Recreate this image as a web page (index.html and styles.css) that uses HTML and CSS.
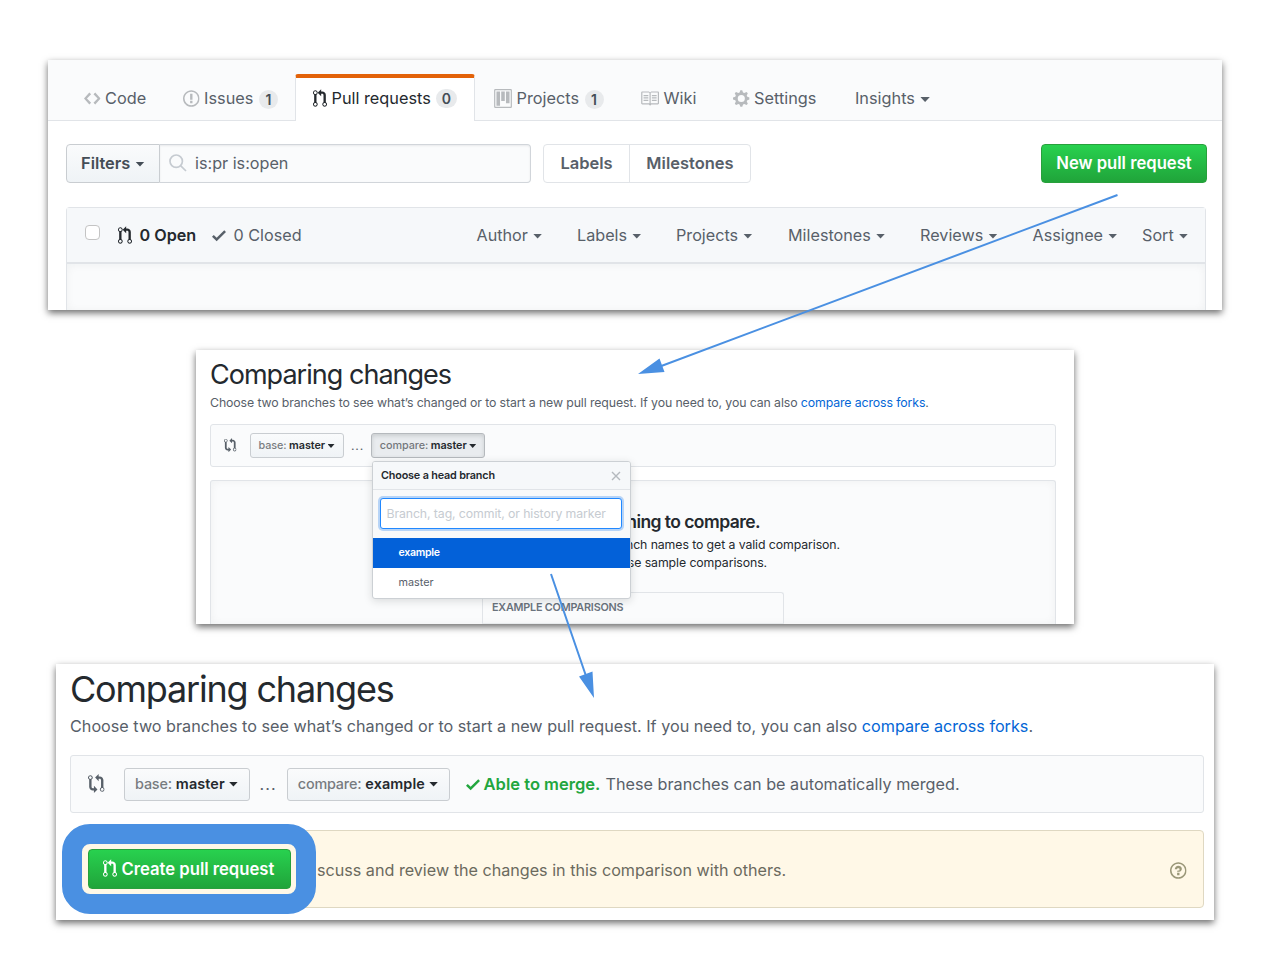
FILE: index.html
```html
<!DOCTYPE html>
<html lang="en">
<head>
<meta charset="utf-8">
<title>Creating a pull request</title>
<link rel="stylesheet" href="styles.css">
</head>
<body>
<svg class="defs" aria-hidden="true">
  <symbol id="code" viewBox="0 0 14 16"><path d="M9.5 3L8 4.5 11.5 8 8 11.5 9.5 13 14 8 9.5 3zm-5 0L0 8l4.5 5L6 11.5 2.5 8 6 4.5 4.5 3z"/></symbol>
  <symbol id="issue" viewBox="0 0 14 16"><path d="M7 2.3c3.14 0 5.7 2.56 5.7 5.7s-2.56 5.7-5.7 5.7A5.71 5.71 0 0 1 1.3 8c0-3.14 2.56-5.7 5.7-5.7zM7 1C3.14 1 0 4.14 0 8s3.14 7 7 7 7-3.14 7-7-3.14-7-7-7zm1 3H6v5h2V4zm0 6H6v2h2v-2z"/></symbol>
  <symbol id="pr" viewBox="0 0 12 16"><path d="M11 11.28V5c-.03-.78-.34-1.47-.94-2.06C9.46 2.35 8.78 2.03 8 2H7V0L4 3l3 3V4h1c.27.02.48.11.69.31.21.2.3.42.31.69v6.28A1.993 1.993 0 0 0 10 15a1.993 1.993 0 0 0 1-3.72zm-1 2.92c-.66 0-1.2-.55-1.2-1.2 0-.65.55-1.2 1.2-1.2.65 0 1.2.55 1.2 1.2 0 .65-.55 1.2-1.2 1.2zM4 3c0-1.11-.89-2-2-2a1.993 1.993 0 0 0-1 3.72v6.56A1.993 1.993 0 0 0 2 15a1.993 1.993 0 0 0 1-3.72V4.72c.59-.34 1-.98 1-1.72zm-.8 10c0 .66-.55 1.2-1.2 1.2-.65 0-1.2-.55-1.2-1.2 0-.65.55-1.2 1.2-1.2.65 0 1.2.55 1.2 1.2zM2 4.2C1.34 4.2.8 3.65.8 3c0-.65.55-1.2 1.2-1.2.65 0 1.2.55 1.2 1.2 0 .65-.55 1.2-1.2 1.2z"/></symbol>
  <symbol id="compare" viewBox="0 0 14 16"><path d="M5 12H4c-.27-.02-.48-.11-.69-.31-.21-.2-.3-.42-.31-.69V4.72A1.993 1.993 0 0 0 2 1a1.993 1.993 0 0 0-1 3.72V11c.03.78.34 1.47.94 2.06.6.59 1.28.91 2.06.94h1v2l3-3-3-3v2zM2 1.8c.66 0 1.2.55 1.2 1.2 0 .65-.55 1.2-1.2 1.2C1.35 4.2.8 3.65.8 3c0-.65.55-1.2 1.2-1.2zm11 9.48V5c-.03-.78-.34-1.47-.94-2.06-.6-.59-1.28-.91-2.06-.94H9V0L6 3l3 3V4h1c.27.02.48.11.69.31.21.2.3.42.31.69v6.28A1.993 1.993 0 0 0 12 15a1.993 1.993 0 0 0 1-3.72zm-1 2.92c-.66 0-1.2-.55-1.2-1.2 0-.65.55-1.2 1.2-1.2.65 0 1.2.55 1.2 1.2 0 .65-.55 1.2-1.2 1.2z"/></symbol>
  <symbol id="project" viewBox="0 0 15 16"><path fill-rule="evenodd" d="M10 12h3V2h-3v10zm-4-2h3V2H6v8zm-4 4h3V2H2v12zm-1 1h13V1H1v14zM14 0H1a1 1 0 0 0-1 1v14a1 1 0 0 0 1 1h13a1 1 0 0 0 1-1V1a1 1 0 0 0-1-1z"/></symbol>
  <symbol id="book" viewBox="0 0 16 16"><path d="M3 5h4v1H3V5zm0 3h4V7H3v1zm0 2h4V9H3v1zm11-5h-4v1h4V5zm0 2h-4v1h4V7zm0 2h-4v1h4V9zm2-6v9c0 .55-.45 1-1 1H9.5l-1 1-1-1H2c-.55 0-1-.45-1-1V3c0-.55.45-1 1-1h5.5l1 1 1-1H15c.55 0 1 .45 1 1zm-8 .5L7.500 3H2v9h6V3.500zm7-.5H9.500l-.5.5V12h6V3z"/></symbol>
  <symbol id="gear" viewBox="0 0 14 16"><path fill-rule="evenodd" d="M14 8.77v-1.6l-1.94-.64-.45-1.09.88-1.84-1.13-1.13-1.81.91-1.09-.45-.69-1.92h-1.6l-.63 1.94-1.11.45-1.84-.88-1.13 1.13.91 1.81-.45 1.09L0 7.23v1.59l1.94.64.45 1.09-.88 1.84 1.13 1.13 1.81-.91 1.09.45.69 1.92h1.59l.63-1.94 1.11-.45 1.84.88 1.13-1.13-.92-1.81.47-1.09L14 8.75v.02zM7 11a3 3 0 1 1 0-6 3 3 0 0 1 0 6z"/></symbol>
  <symbol id="check" viewBox="0 0 12 16"><path d="M12 5l-8 8-4-4 1.5-1.5L4 10l6.5-6.5L12 5z"/></symbol>
  <symbol id="help" viewBox="0 0 14 16"><path d="M6 10h2v2H6v-2zm4-3.5C10 8.64 8 9 8 9H6c0-.55.45-1 1-1h.5c.28 0 .5-.22.5-.5v-1c0-.28-.22-.5-.5-.5h-1c-.28 0-.5.22-.5.5V7H4c0-1.5 1.5-3 3-3s3 1 3 2.5zM7 2.3c3.14 0 5.7 2.56 5.7 5.7s-2.56 5.7-5.7 5.7A5.71 5.71 0 0 1 1.3 8c0-3.14 2.56-5.7 5.7-5.7zM7 1C3.14 1 0 4.14 0 8s3.14 7 7 7 7-3.14 7-7-3.14-7-7-7z"/></symbol>
</svg>

<section class="panel panel-list">
  <nav class="tabs">
    <a class="tab"><svg class="icon i14"><use href="#code"/></svg><span>Code</span></a>
    <a class="tab"><svg class="icon i14"><use href="#issue"/></svg><span>Issues</span><b class="count">1</b></a>
    <a class="tab tab-active"><svg class="icon i12"><use href="#pr"/></svg><span>Pull requests</span><b class="count">0</b></a>
    <a class="tab"><svg class="icon i15"><use href="#project"/></svg><span>Projects</span><b class="count">1</b></a>
    <a class="tab"><svg class="icon i16"><use href="#book"/></svg><span>Wiki</span></a>
    <a class="tab"><svg class="icon i14"><use href="#gear"/></svg><span>Settings</span></a>
    <a class="tab"><span>Insights</span><i class="caret"></i></a>
  </nav>
  <div class="toolbar">
    <div class="filters">Filters<i class="caret"></i></div>
    <div class="search"><svg class="lens" viewBox="0 0 18 18"><circle cx="7.2" cy="7.2" r="6.2"/><path d="M11.8 11.8l5.2 5.2"/></svg><span>is:pr is:open</span></div>
    <div class="pair"><span>Labels</span><span>Milestones</span></div>
    <div class="green new-pr">New pull request</div>
  </div>
  <div class="list">
    <div class="list-head">
      <span class="box"></span>
      <span class="state open"><svg class="icon i12"><use href="#pr"/></svg>0 Open</span>
      <span class="state closed"><svg class="icon i12"><use href="#check"/></svg>0 Closed</span>
      <div class="sorts">
        <span>Author<i class="caret"></i></span><span>Labels<i class="caret"></i></span><span>Projects<i class="caret"></i></span><span>Milestones<i class="caret"></i></span><span>Reviews<i class="caret"></i></span><span>Assignee<i class="caret"></i></span><span>Sort<i class="caret"></i></span>
      </div>
    </div>
    <div class="list-body"></div>
  </div>
</section>

<section class="panel panel-small">
  <h1 class="title">Comparing changes</h1>
  <p class="lead">Choose two branches to see what’s changed or to start a new pull request. If you need to, you can also <a>compare across forks</a>.</p>
  <div class="range">
    <svg class="icon i14"><use href="#compare"/></svg>
    <span class="branch base"><em>base:</em><b>master</b><i class="caret"></i></span>
    <span class="dots">...</span>
    <span class="branch compare pressed"><em>compare:</em><b>master</b><i class="caret"></i></span>
  </div>
  <div class="blank">
    <h2>hing to compare.</h2>
    <p class="blank-one">nch names to get a valid comparison.</p>
    <p class="blank-two">se sample comparisons.</p>
    <div class="examples">EXAMPLE COMPARISONS</div>
  </div>
  <div class="menu">
    <div class="menu-head"><b>Choose a head branch</b><svg class="close" viewBox="0 0 10 10"><path d="M1 1l8 8M9 1L1 9"/></svg></div>
    <div class="menu-filter"><div class="field">Branch, tag, commit, or history marker</div></div>
    <div class="item selected">example</div>
    <div class="item">master</div>
  </div>
</section>

<section class="panel panel-large">
  <h1 class="title">Comparing changes</h1>
  <p class="lead">Choose two branches to see what’s changed or to start a new pull request. If you need to, you can also <a>compare across forks</a>.</p>
  <div class="range">
    <svg class="icon i14"><use href="#compare"/></svg>
    <span class="branch base"><em>base:</em><b>master</b><i class="caret"></i></span>
    <span class="dots">...</span>
    <span class="branch compare"><em>compare:</em><b>example</b><i class="caret"></i></span>
    <span class="able"><svg class="icon i12"><use href="#check"/></svg><b>Able to merge.</b></span>
    <span class="able-text">These branches can be automatically merged.</span>
  </div>
  <div class="notice">
    <div class="green create"><svg class="icon i12"><use href="#pr"/></svg><span>Create pull request</span></div>
    <span class="notice-text">scuss and review the changes in this comparison with others.</span>
    <svg class="icon i14 help"><use href="#help"/></svg>
  </div>
  <div class="ring"></div>
</section>

<svg class="arrows" viewBox="0 0 1262 970">
  <path class="line" d="M1117.500 195L660 366.500M551 574L586 676"/>
  <path class="head" d="M638 374L659.500 358.500L664.500 372ZM594 698L579 676.500L592.500 671.500Z"/>
</svg>
</body>
</html>
```
FILE: styles.css
```css
* { box-sizing: border-box; }
body { position: relative; margin: 0; width: 1262px; height: 970px; overflow: hidden; background: #fff; font-family: Inter, "Liberation Sans", sans-serif; font-size: 16.200px; color: #586069; padding-top: 60px; }
h1, h2, p { margin: 0; font-weight: 400; }
i, em { font-style: normal; }
a { color: #0366d6; }
span, b { white-space: nowrap; }
.defs { position: absolute; width: 0; height: 0; }
.icon { height: 19px; fill: currentColor; flex: none; }
.i12 { width: 14px; }
.i14 { width: 16.6px; }
.i15 { width: 18px; }
.i16 { width: 19px; }
.caret { flex: none; width: 9.400px; height: 5px; margin: 2px 0 0 5px; background: currentColor; clip-path: polygon(0 0, 100% 0, 50% 100%); }
.panel { position: relative; background: #fff; box-shadow: 0 3px 7px rgba(0,0,0,.58); }

/* Pull request list */
.panel-list { width: 1174px; height: 250px; margin-left: 48px; }
.tabs { display: grid; grid-template-columns: 99px 112px 180px 147px 92px 122px 100px; height: 61px; padding: 14px 0 0 36px; background: #fafbfc; border-bottom: 1.500px solid #e1e4e8; }
.tab { display: flex; align-items: center; gap: 4.500px; height: 47px; padding-top: 1px; font-size: 16.300px; color: #586069; }
.tab .icon { margin-top: 1px; color: #b7babd; }
.tab .caret { margin: 3px 0 0 1px; }
.tab-active { background: #fff; border: 1px solid #e1e4e8; border-top: 4px solid #e36209; border-bottom: 0; border-radius: 3px 3px 0 0; padding: 0 0 4px 17px; color: #24292e; }
.tab-active .icon { color: #24292e; }
.tab:nth-child(4), .tab:nth-child(6), .tab:nth-child(7) { padding-left: 19px; }
.tab:nth-child(5) { padding-left: 18px; }
.count { min-width: 19px; height: 19px; margin: 2px 0 0 1px; padding: 0 5.500px; border-radius: 10px; background: #e8eaec; font-size: 14px; font-weight: 600; line-height: 19px; text-align: center; color: #444d56; }
.toolbar { display: flex; margin: 23px 15px 0 18px; height: 39px; }
.filters { display: flex; align-items: center; width: 94px; padding: 0 0 1px 14px; border: 1px solid #c9cdd1; border-radius: 4px 0 0 4px; background: linear-gradient(#fafbfc, #eff3f6); font-size: 16.400px; font-weight: 600; color: #444d56; }
.search { display: flex; align-items: center; width: 371px; padding: 0 0 1px 9px; gap: 8px; border: 1px solid #d1d5da; border-left: 0; border-radius: 0 4px 4px 0; background: #fafbfc; box-shadow: inset 0 1px 2px rgba(27,31,35,.075); }
.lens { width: 18px; height: 18px; fill: none; stroke: #c6cbd1; stroke-width: 1.700; }
.pair { display: flex; margin-left: 12px; border: 1px solid #e1e4e8; border-radius: 4px; font-size: 16.500px; font-weight: 600; line-height: 37px; }
.pair span { width: 85px; text-align: center; }
.pair span + span { width: 121px; border-left: 1px solid #e1e4e8; }
.green { border: 1px solid #28a03c; border-radius: 4px; background: linear-gradient(#28d14f, #20a43a); color: #fff; font-size: 16.650px; font-weight: 600; }
.new-pr { width: 166px; margin-left: auto; line-height: 37px; text-align: center; }
.list { margin: 24px 16px 0 18px; height: 103px; border: 1.500px solid #e1e4e8; border-bottom: 0; border-radius: 4px 4px 0 0; }
.list-head { display: flex; align-items: center; height: 56px; background: #f6f8fa; border-bottom: 2px solid #e1e4e8; }
.list-body { height: 46px; background: #fafbfc; box-shadow: inset 0 1px 8px rgba(27,31,35,.05); }
.box { width: 15px; height: 15px; margin: -6px 0 0 18px; border: 1px solid #c4c4c4; border-radius: 4px; background: #fff; }
.state { display: flex; align-items: center; gap: 7.500px; }
.open { width: 94px; margin-left: 18px; color: #24292e; font-weight: 600; }
.sorts { display: grid; grid-template-columns: 100.500px 99px 112px 132px 112.500px 109.500px 60px; margin: 0 -1.500px 0 auto; width: 730px; }
.sorts span { display: flex; align-items: center; }

/* Comparison, branch menu open */
.panel-small { width: 878px; height: 274px; margin: 40px 0 0 196px; padding: 7px 18px 0 14px; font-size: 12.300px; }
.panel-small .title { font-size: 27px; line-height: 35px; letter-spacing: -.980px; color: #24292e; }
.title { white-space: nowrap; }
.lead { white-space: nowrap; }
.panel-small .lead { margin-top: 1px; line-height: 20px; letter-spacing: -.104px; }
.range { display: flex; align-items: center; border: 1px solid #e1e4e8; border-radius: 3px; background: #fafbfc; }
.panel-small .range { height: 43px; margin-top: 11px; padding-left: 13px; }
.panel-small .range .icon { width: 12.500px; height: 14.300px; }
.branch { display: flex; align-items: center; justify-content: center; border: 1px solid #c9cdd1; border-radius: 3px; background: linear-gradient(#fafbfc, #eff3f6); color: #24292e; }
.branch em { opacity: .6; font-weight: 500; }
.branch b { font-weight: 600; }
.panel-small .branch { height: 25px; gap: 2.500px; font-size: 10.800px; letter-spacing: -.05px; }
.panel-small .branch .caret { width: 7px; height: 4px; margin: 1px 0 0; }
.panel-small .base { width: 94px; margin-left: 13px; }
.panel-small .dots { width: 28px; text-align: center; letter-spacing: .8px; }
.panel-small .compare { width: 114px; margin-left: -.5px; }
.branch.pressed { background: #e9ecef; border-color: #b5b9bd; box-shadow: inset 0 2px 4px rgba(27,31,35,.15); }
.blank { height: 144px; margin-top: 13px; padding-top: 30px; border: 1px solid #e1e4e8; border-bottom: 0; border-radius: 3px 3px 0 0; background: #fafbfc; box-shadow: inset 0 0 8px rgba(27,31,35,.05); color: #24292e; }
.blank h2 { width: 549px; text-align: right; font-size: 17.500px; line-height: 22px; letter-spacing: -.560px; font-weight: 600; }
.blank p { text-align: right; line-height: 18px; letter-spacing: -.09px; }
.blank-one { width: 629px; }
.blank .blank-one { margin-top: 3px; }
.blank-two { width: 556px; }
.examples { width: 302px; height: 32px; margin: 20px 0 0 271px; padding-left: 9px; border: 1px solid #e1e4e8; border-bottom-color: #e8ebed; border-radius: 3px 3px 0 0; line-height: 29px; font-size: 10.800px; font-weight: 600; letter-spacing: -.200px; color: #6a737d; }
.menu { position: absolute; left: 175.500px; top: 111px; width: 259px; height: 138px; border: 1px solid #ccd0d4; border-radius: 3px; background: #fff; box-shadow: 0 2px 9px rgba(27,31,35,.15); font-size: 10.800px; color: #586069; overflow: hidden; }
.menu-head { display: flex; align-items: center; justify-content: space-between; height: 28px; padding: 0 9px 0 8.500px; border-bottom: 1px solid #e1e4e8; background: #f6f8fa; color: #24292e; }
.menu-head b { font-weight: 600; letter-spacing: -.160px; }
.close { width: 10px; height: 10px; fill: none; stroke: #b4b9be; stroke-width: 1.400; }
.menu-filter { height: 48px; padding: 8px 8px 0 7.500px; background: #f8f9fa; }
.field { height: 31px; padding-left: 5.500px; border: 1.500px solid #2188ff; border-radius: 3px; background: #fff; box-shadow: 0 0 0 2px #b7d4f7; font-size: 12.300px; line-height: 29px; letter-spacing: -.1px; color: #c6cbd1; white-space: nowrap; }
.item { height: 30px; padding-left: 26px; line-height: 30px; }
.item.selected { background: #0361d9; color: #fff; font-size: 10.600px; font-weight: 600; letter-spacing: -.300px; }

/* Comparison, ready to create */
.panel-large { width: 1158px; height: 256px; margin: 40px 0 0 56px; padding: 3px 10px 0 14px; }
.panel-large .title { font-size: 36px; line-height: 45px; letter-spacing: -1.190px; color: #24292e; }
.panel-large .lead { line-height: 26px; margin-top: 1px; }
.panel-large .range { height: 58px; margin-top: 16px; padding-left: 17px; }
.panel-large .range > .icon { margin-top: -1px; }
.panel-large .branch { height: 33px; padding-bottom: 1px; gap: 4px; font-size: 14.400px; }
.panel-large .branch em { letter-spacing: -.200px; }
.panel-large .branch b { letter-spacing: .1px; }
.panel-large .branch .caret { margin: 1px 0 0; }
.panel-large .base { width: 126px; margin-left: 19px; }
.panel-large .dots { width: 37px; text-align: center; letter-spacing: 1px; }
.panel-large .compare { width: 163px; }
.able { display: flex; align-items: center; gap: 4px; width: 140px; margin-left: 16px; color: #22a63e; }
.able b { font-weight: 600; font-size: 16.550px; }
.notice { display: flex; align-items: center; height: 78px; margin-top: 17px; padding-left: 17px; border: 1px solid #dfd8c2; border-radius: 4px; background: #fff8e7; }
.create { display: flex; align-items: center; width: 203px; height: 40px; margin-top: -1px; padding-left: 14px; gap: 4.500px; }
.notice-text { margin: 1px 0 0 26px; color: #6b6a5e; font-size: 16.150px; }
.help { margin: 3px 16px 0 auto; color: #9a9778; }
.ring { position: absolute; left: 6px; top: 160px; width: 254px; height: 90px; border: 20px solid #4a90e2; border-radius: 28px; }
.arrows { position: absolute; left: 0; top: 0; width: 1262px; height: 970px; }
.line { fill: none; stroke: #4a90e2; stroke-width: 2; }
.head { fill: #4a90e2; }
```
